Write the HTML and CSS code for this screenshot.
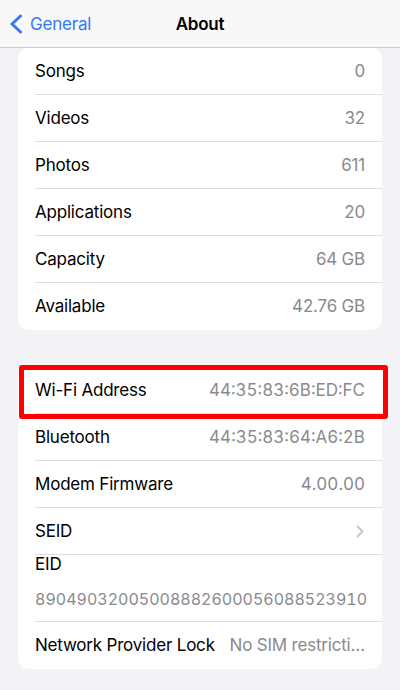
FILE: index.html
```html
<!DOCTYPE html>
<html lang="en">
<head>
<meta charset="utf-8">
<title>About</title>
<link rel="stylesheet" href="styles.css">
</head>
<body>
<header class="navbar">
  <div class="back">
    <svg class="back-chevron" width="14" height="20" viewBox="0 0 14 20"><path d="M11.5 2 L3 10 L11.5 18" fill="none" stroke="#3478f6" stroke-width="3" stroke-linecap="round" stroke-linejoin="round"/></svg>
    <span class="back-label">General</span>
  </div>
  <div class="title">About</div>
</header>
<main class="content">
  <section class="group">
    <div class="row"><span class="label">Songs</span><span class="value">0</span></div>
    <div class="row"><span class="label">Videos</span><span class="value">32</span></div>
    <div class="row"><span class="label">Photos</span><span class="value">611</span></div>
    <div class="row"><span class="label">Applications</span><span class="value">20</span></div>
    <div class="row"><span class="label">Capacity</span><span class="value">64 GB</span></div>
    <div class="row"><span class="label">Available</span><span class="value">42.76 GB</span></div>
  </section>
  <section class="group group-second">
    <div class="row row-highlight"><span class="label">Wi-Fi Address</span><span class="value mono">44:35:83:6B:ED:FC</span><span class="highlight-box"></span></div>
    <div class="row"><span class="label">Bluetooth</span><span class="value mono">44:35:83:64:A6:2B</span></div>
    <div class="row"><span class="label">Modem Firmware</span><span class="value mono">4.00.00</span></div>
    <div class="row"><span class="label">SEID</span><svg class="chevron" width="8" height="13" viewBox="0 0 8 13"><path d="M1.5 1.5 L6.5 6.5 L1.5 11.5" fill="none" stroke="#c4c4c7" stroke-width="1.8" stroke-linecap="round" stroke-linejoin="round"/></svg></div>
    <div class="row row-stack"><span class="label">EID</span><span class="sub mono">89049032005008882600056088523910</span></div>
    <div class="row"><span class="label nowrap">Network Provider Lock</span><span class="value">No SIM restricti…</span></div>
  </section>
</main>
</body>
</html>
```

FILE: styles.css
```css
* { box-sizing: border-box; }
html, body { margin: 0; padding: 0; }
body {
  background: #f2f2f7;
  font-family: Inter, "Noto Sans", "Liberation Sans", sans-serif;
  font-size: 17px;
  color: #000;
  width: 400px;
  height: 690px;
  overflow: hidden;
  -webkit-font-smoothing: antialiased;
}
.navbar {
  height: 48px;
  background: #f8f8f8;
  border-bottom: 1px solid #c9c9cc;
  display: flex;
  align-items: center;
  position: relative;
}
.back {
  display: flex;
  align-items: center;
  padding-left: 9px;
  gap: 7px;
  color: #3478f6;
  letter-spacing: -0.2px;
}
.back-chevron { display: block; margin-top: 1px; }
.title {
  position: absolute;
  left: 0;
  right: 0;
  text-align: center;
  font-weight: 600;
  letter-spacing: -0.2px;
  pointer-events: none;
}
.content {
  padding: 0 18px;
}
.group {
  background: #fff;
  border-radius: 10px;
}
.group-second { margin-top: 37px; }
.row {
  position: relative;
  display: flex;
  align-items: center;
  justify-content: space-between;
  height: 47px;
  padding: 0 17px 1px 17px;
  gap: 9px;
  letter-spacing: -0.2px;
}
.row + .row::before {
  content: "";
  position: absolute;
  left: 17px;
  right: 0;
  top: -1px;
  height: 1px;
  background: #dedee1;
}
.label { white-space: nowrap; }
.nowrap { flex: none; }
.value {
  color: #8a8a8e;
  white-space: nowrap;
}
.mono {
  font-variant-numeric: tabular-nums;
  letter-spacing: 0;
}
.chevron { display: block; margin-right: 1px; }
.row-stack {
  height: 67px;
  flex-direction: column;
  align-items: flex-start;
  justify-content: flex-start;
  gap: 0;
  padding-top: 0;
}
.row-stack .label { line-height: 18px; }
.row-stack .sub {
  color: #8a8a8e;
  margin-top: 15px;
  line-height: 22px;
  font-size: 16px;
}
.highlight-box {
  position: absolute;
  left: 1px;
  right: -6px;
  top: -2px;
  bottom: -5px;
  border: 5px solid #ff0000;
  border-radius: 3px;
  pointer-events: none;
}
```
